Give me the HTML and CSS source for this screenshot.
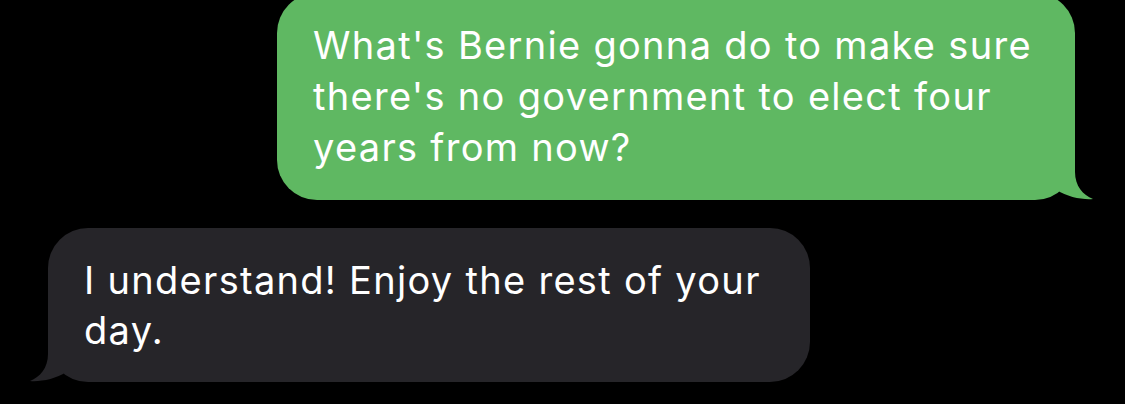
FILE: index.html
```html
<!DOCTYPE html>
<html lang="en">
<head>
    <meta charset="UTF-8">
    <meta name="viewport" content="width=device-width, initial-scale=1.0">
    <title>Messages</title>
    <link rel="stylesheet" href="styles.css">
</head>
<body>
    <div class="thread">
        <div class="row sent">
            <div class="bubble green">
                What's Bernie gonna do to make sure there's no government to elect four years from now?
                <svg class="tail" width="50" height="40" viewBox="0 0 50 40">
                    <path d="M30 0 L30 12 C30 26 38 35 48 39 C38 40 22 37 12 30 L12 0 Z" />
                </svg>
            </div>
        </div>
        <div class="row received">
            <div class="bubble gray">
                I understand! Enjoy the rest of your day.
                <svg class="tail" width="50" height="40" viewBox="0 0 50 40">
                    <path d="M30 0 L30 12 C30 26 38 35 48 39 C38 40 22 37 12 30 L12 0 Z" />
                </svg>
            </div>
        </div>
    </div>
</body>
</html>
```

FILE: styles.css
```css
html, body {
    background-color: #000;
}
body {
    margin: 0;
    font-family: 'Inter', 'Helvetica Neue', sans-serif;
    color: #fff;
    overflow: hidden;
}
.thread {
    display: flex;
    flex-direction: column;
    gap: 28px;
    margin-top: -7px;
}
.row {
    display: flex;
}
.row.sent {
    justify-content: flex-end;
    padding-right: 50px;
}
.row.received {
    justify-content: flex-start;
    padding-left: 48px;
}
.bubble {
    position: relative;
    box-sizing: border-box;
    padding: 27px 36px;
    border-radius: 40px;
    font-size: 38px;
    line-height: 51px;
    letter-spacing: 1.3px;
}
.bubble.green {
    width: 798px;
    background-color: #5fb862;
}
.bubble.gray {
    width: 762px;
    background-color: #262529;
    line-height: 50px;
}
.tail {
    position: absolute;
    bottom: 0;
}
.green .tail {
    right: -20px;
    fill: #5fb862;
}
.gray .tail {
    left: -20px;
    fill: #262529;
    transform: scaleX(-1);
}
```
